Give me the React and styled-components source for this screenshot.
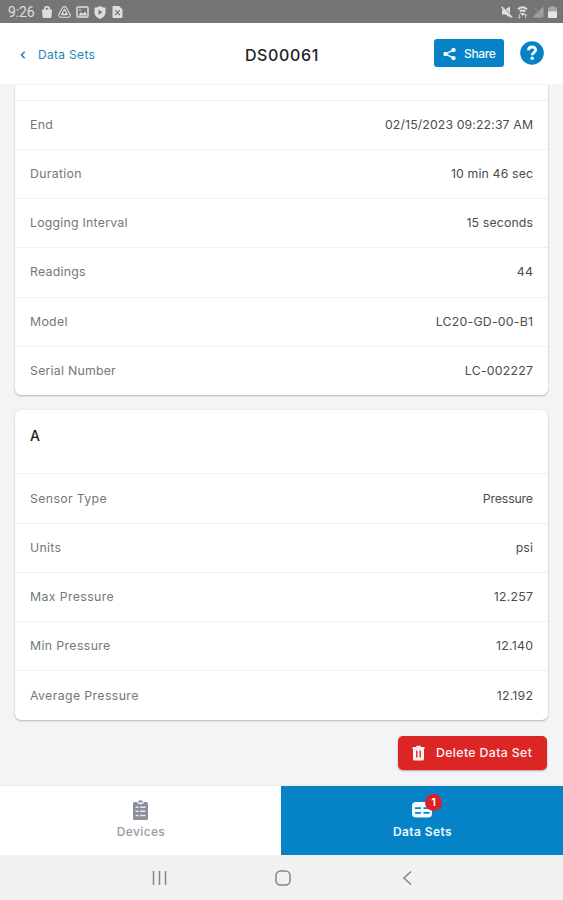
import React from 'react';
import styled, { createGlobalStyle } from 'styled-components';

const Global = createGlobalStyle`
  * { box-sizing: border-box; }
  body { margin: 0; background: #f3f4f6; font-family: Inter, "Liberation Sans", sans-serif; }
`;

const Screen = styled.div`
  width: 563px;
  height: 900px;
  display: flex;
  flex-direction: column;
  overflow: hidden;
  background: #f2f4f6;
  svg { display: block; flex: none; }
`;

const StatusBar = styled.div`
  height: 23px;
  flex: none;
  display: flex;
  align-items: center;
  justify-content: space-between;
  padding: 1px 6px 0 8px;
  background: #757575;
  color: #dedede;
`;
const Clock = styled.span`
  width: 28px;
  font: 400 14px/20px Roboto, sans-serif;
  letter-spacing: -0.1px;
`;
const StatusIcons = styled.div`
  display: flex;
  align-items: center;
  gap: ${(p) => p.$gap}px;
`;

const Header = styled.header`
  height: 62px;
  flex: none;
  display: grid;
  grid-template-columns: 1fr auto 1fr;
  align-items: center;
  padding: 0 19px 0 20px;
  background: #fff;
  border-bottom: 1px solid #f3f4f5;
`;
const BackLink = styled.div`
  display: flex;
  align-items: center;
  gap: 12px;
  margin-top: 2px;
  color: #2388b8;
  font-size: 12px;
  letter-spacing: 0.32px;
`;
const Title = styled.h1`
  margin: 3px 0 0;
  font-size: 16px;
  font-weight: 450;
  letter-spacing: 0.65px;
  color: #222;
`;
const HeaderActions = styled.div`
  display: flex;
  align-items: center;
  justify-content: flex-end;
  gap: 16px;
  margin-top: -1px;
`;
const ShareButton = styled.button`
  width: 70px;
  height: 28px;
  display: flex;
  align-items: center;
  gap: 8px;
  padding: 1px 0 0 9px;
  border: 0;
  border-radius: 3px;
  background: #0583c6;
  color: #f2fafe;
  font: 550 12px/27px Inter, sans-serif;
  letter-spacing: -0.35px;
`;

const Content = styled.main`
  height: 700px;
  flex: none;
  display: flex;
  flex-direction: column;
  overflow: hidden;
  padding: 0 15px;
`;
const Card = styled.section`
  flex: none;
  margin-bottom: 15px;
  background: #fff;
  border-radius: ${(p) => (p.$scrolled ? '0 0 6px 6px' : '6px')};
  box-shadow: 0 1px 2px rgba(0, 0, 0, 0.25), 0 0 2px rgba(0, 0, 0, 0.06);
`;
const CardHead = styled.div`
  height: 63.4px;
  padding: 16px 15px 0;
  font-size: 14px;
  font-weight: 500;
  line-height: 20px;
  color: #1c1c1c;
`;
const ScrolledRow = styled.div`
  height: 14.6px;
`;
const Row = styled.div`
  height: 49.25px;
  display: flex;
  align-items: center;
  justify-content: space-between;
  padding: 0 15px;
  border-top: 1px solid #f0f1f2;
  font-size: 12.3px;
  line-height: 16px;
`;
const Label = styled.span`
  color: #757779;
  letter-spacing: ${(p) => p.$track}px;
`;
const Value = styled.span`
  color: #4b4c4e;
  letter-spacing: ${(p) => p.$track}px;
  margin-right: ${(p) => -p.$track}px;
`;

const DeleteButton = styled.button`
  align-self: flex-end;
  width: 149px;
  height: 34px;
  flex: none;
  margin: 1px 1px 0 0;
  display: flex;
  align-items: center;
  gap: 11px;
  padding: 0 0 0 14px;
  border: 0;
  border-radius: 5px;
  background: #dc2626;
  color: #fff3f3;
  font: 550 12.3px/34px Inter, sans-serif;
  letter-spacing: 0.37px;
  white-space: nowrap;
  box-shadow: 0 1px 2px rgba(90, 0, 0, 0.35);
`;

const Tabs = styled.nav`
  height: 70px;
  flex: none;
  display: grid;
  grid-template-columns: 281px 1fr;
  background: #fff;
  border-top: 1px solid #e9ebed;
`;
const Tab = styled.div`
  display: flex;
  flex-direction: column;
  align-items: center;
  padding-top: 14px;
  gap: 4px;
  background: ${(p) => (p.$active ? '#0583c6' : '#fff')};
  color: ${(p) => (p.$active ? '#eef9ff' : '#999ba1')};
  font-size: 12px;
  line-height: 16px;
  font-weight: ${(p) => (p.$active ? 600 : 450)};
  letter-spacing: ${(p) => (p.$active ? 0.4 : 0.35)}px;
`;
const TabLabel = styled.span`
  padding-left: 1px;
`;
const TabIcon = styled.div`
  position: relative;
  height: 20px;
`;
const Badge = styled.span`
  position: absolute;
  left: 13px;
  top: -6.5px;
  width: 17px;
  height: 17px;
  border-radius: 50%;
  background: #dc2028;
  color: #fff;
  font-size: 11px;
  line-height: 17px;
  letter-spacing: 0;
  text-align: center;
`;

const SystemNav = styled.div`
  height: 45px;
  flex: none;
  display: flex;
  align-items: center;
  gap: 107px;
  padding: 1px 0 0 150px;
  background: #f1f1f1;
`;

const Bag = () => (
  <svg width="12" height="12" viewBox="0 0 12 12">
    <path d="M1 3.500h10L10.500 10.500a1.500 1.500 0 0 1-1.500 1.500H3a1.500 1.500 0 0 1-1.500-1.500z" fill="currentColor" />
    <path d="M3.700 4V3a2.300 2.300 0 0 1 4.600 0v1" fill="none" stroke="currentColor" strokeWidth="1.600" />
  </svg>
);
const Drive = () => (
  <svg width="13" height="12" viewBox="0 0 13 12" fill="none" stroke="currentColor" strokeWidth="1.1" strokeLinejoin="round">
    <path d="M4.7 1.4Q6.5-.2 8.3 1.4L12 8q.8 2.5-1.5 3.2h-8Q.2 10.500 1 8z" />
    <path d="M6.500 3.200 9.500 8.500h-6zM4.300 6 6 9.500M8.700 6 7 9.500" />
  </svg>
);
const Picture = () => (
  <svg width="13" height="12" viewBox="0 0 13 12">
    <rect x="1" y="1" width="11" height="10" rx="1" fill="none" stroke="currentColor" strokeWidth="1.5" />
    <path d="M2.500 9.500 5 6l1.700 2L9 5.500l2 4z" fill="currentColor" />
    <circle cx="4" cy="3.800" r=".9" fill="currentColor" />
  </svg>
);
const Shield = () => (
  <svg width="12" height="13" viewBox="0 0 12 13">
    <path d="M6 0Q8.500 1.700 11.500 1.800V6.500Q11 11 6 13 1 11 .5 6.500V1.800Q3.500 1.700 6 0z" fill="currentColor" />
    <path d="M4.500 3.500 8.500 6.200 4.500 9z" fill="#757575" />
  </svg>
);
const FileX = () => (
  <svg width="12" height="12" viewBox="-1.500 0 12 12">
    <path d="M1 0h5.500L10 3.500V11a1 1 0 0 1-1 1H1a1 1 0 0 1-1-1V1a1 1 0 0 1 1-1z" fill="currentColor" />
    <path d="M2.700 4.200 7.300 9.200M7.300 4.200 2.700 9.200" stroke="#757575" strokeWidth="1.200" />
  </svg>
);
const Mute = () => (
  <svg width="12" height="12" viewBox="0 0 12 12">
    <path d="M1 3.500h3L9 .5V11.500L4.500 8.500H1z" fill="currentColor" />
    <path d="M1.500 .3 11.800 10.600" stroke="#757575" strokeWidth="1" />
    <path d="M.6.800 11.300 11.500" stroke="currentColor" strokeWidth="1.500" />
  </svg>
);
const Wifi = () => (
  <svg width="11" height="13" viewBox="0 0 11 13">
    <path d="M1 3.200Q5.500-.5 10 3.200M2.700 5.500q2.800-2.200 5.600 0" fill="none" stroke="currentColor" strokeWidth="1.900" />
    <path d="M3 7h5L5.500 10z" fill="currentColor" />
    <path d="M2.300 8v4M1 10.700l1.300 1.500 1.300-1.500M8.500 12V8M7.200 9.500 8.500 8l1.300 1.500" fill="none" stroke="currentColor" strokeWidth=".8" />
  </svg>
);
const Signal = () => (
  <svg width="12" height="12" viewBox="0 0 12 12">
    <path d="M11.500.5v11H.5z" fill="#a2a2a2" />
    <path d="M1 1 11 11" stroke="#8c8c8c" strokeWidth="1" />
  </svg>
);
const Battery = () => (
  <svg width="9" height="12" viewBox="0 0 9 12">
    <path d="M3 0h3v1.300h2a1 1 0 0 1 1 1V6H0V2.300a1 1 0 0 1 1-1h2z" fill="#a8a8a8" />
    <path d="M0 5.500h9V11a1 1 0 0 1-1 1H1a1 1 0 0 1-1-1z" fill="#e6e6e6" />
  </svg>
);
const BackChevron = () => (
  <svg width="6" height="8" viewBox="0 0 6 8" fill="none" stroke="currentColor" strokeWidth="1.600">
    <path d="M4.600.8 1.500 4l3.100 3.200" />
  </svg>
);
const ShareIcon = () => (
  <svg width="13" height="14" viewBox="0 0 13 14" fill="currentColor">
    <path d="M10.500 2.800 2.500 7l8 4.200" fill="none" stroke="currentColor" strokeWidth="1.500" />
    <circle cx="10.500" cy="2.900" r="2.200" />
    <circle cx="2.500" cy="7" r="2.200" />
    <circle cx="10.500" cy="11.100" r="2.200" />
  </svg>
);
const Help = () => (
  <svg width="24" height="24" viewBox="0 0 24 24">
    <circle cx="12" cy="12" r="11.800" fill="#0583c6" />
    <path d="M8.500 9.300C8.500 4.900 15.600 5 15.600 9c0 2.500-3.300 2.500-3.300 5.200" fill="none" stroke="#fff" strokeWidth="2.800" />
    <circle cx="12.200" cy="17.300" r="1.700" fill="#fff" />
  </svg>
);
const Trash = () => (
  <svg width="13" height="16" viewBox="0 0 13 16">
    <path d="M4.300 2V.8h4.400V2H12.500v2H.5V2z" fill="currentColor" />
    <path d="M1 3h11v11a1.500 1.500 0 0 1-1.500 1.500h-8A1.500 1.500 0 0 1 1 14z" fill="currentColor" />
    <path d="M4.800 5.500v7M8.200 5.500v7" stroke="#dc2626" strokeWidth="1.400" />
  </svg>
);
const Clipboard = () => (
  <svg width="15" height="20" viewBox="0 0 15 20">
    <path d="M1.500 2H4q.3 2 3.500 2T11 2h2.500A1.500 1.500 0 0 1 15 3.500v15a1.500 1.500 0 0 1-1.500 1.500h-12A1.500 1.500 0 0 1 0 18.500v-15A1.500 1.500 0 0 1 1.500 2z" fill="#8b8e9b" />
    <path d="M5 1.500Q7.500-.8 10 1.500V2.500H5z" fill="#8b8e9b" />
    <path d="M2.600 7.200h3M7 7.200h5.500M2.600 11.300h3M7 11.300h5.500M2.600 15.500h3M7 15.500h5.500" stroke="#e4e7f0" strokeWidth="1.500" />
  </svg>
);
const Table = () => (
  <svg width="20" height="20" viewBox="0 0 20 20">
    <rect x="0" y="2" width="20" height="15.500" rx="4" fill="#f5fcff" />
    <path d="M3 8.200h6M11.500 8.200h6M3 12.800h6M11.500 12.800h6" stroke="#0583c6" strokeWidth="1.800" />
  </svg>
);

const summary = [
  { label: 'End', value: '02/15/2023 09:22:37 AM', valueTrack: 0.12 },
  { label: 'Duration', value: '10 min 46 sec', valueTrack: 0.14 },
  { label: 'Logging Interval', value: '15 seconds', track: 0.24, valueTrack: 0.14 },
  { label: 'Readings', value: '44', track: 0.24 },
  { label: 'Model', value: 'LC20-GD-00-B1' },
  { label: 'Serial Number', value: 'LC-002227', track: 0.24 },
];
const sensor = [
  { label: 'Sensor Type', value: 'Pressure', track: 0.36, valueTrack: -0.16 },
  { label: 'Units', value: 'psi', valueTrack: 0.14 },
  { label: 'Max Pressure', value: '12.257', track: 0.38 },
  { label: 'Min Pressure', value: '12.140', track: 0.38 },
  { label: 'Average Pressure', value: '12.192', track: 0.39 },
];

const Rows = ({ items }) =>
  items.map(({ label, value, track = 0.3, valueTrack = 0.24 }) => (
    <Row key={label}>
      <Label $track={track}>{label}</Label>
      <Value $track={valueTrack}>{value}</Value>
    </Row>
  ));

export default function App() {
  return (
    <Screen>
      <Global />
      <StatusBar>
        <StatusIcons $gap={5}>
          <Clock>9:26</Clock>
          <Bag />
          <Drive />
          <Picture />
          <Shield />
          <FileX />
        </StatusIcons>
        <StatusIcons $gap={4}>
          <Mute />
          <Wifi />
          <Signal />
          <Battery />
        </StatusIcons>
      </StatusBar>
      <Header>
        <BackLink>
          <BackChevron />
          Data Sets
        </BackLink>
        <Title>DS00061</Title>
        <HeaderActions>
          <ShareButton>
            <ShareIcon />
            Share
          </ShareButton>
          <Help />
        </HeaderActions>
      </Header>
      <Content>
        <Card $scrolled>
          <ScrolledRow />
          <Rows items={summary} />
        </Card>
        <Card>
          <CardHead>A</CardHead>
          <Rows items={sensor} />
        </Card>
        <DeleteButton>
          <Trash />
          Delete Data Set
        </DeleteButton>
      </Content>
      <Tabs>
        <Tab>
          <TabIcon>
            <Clipboard />
          </TabIcon>
          <TabLabel>Devices</TabLabel>
        </Tab>
        <Tab $active>
          <TabIcon>
            <Table />
            <Badge>1</Badge>
          </TabIcon>
          <TabLabel>Data Sets</TabLabel>
        </Tab>
      </Tabs>
      <SystemNav>
        <svg width="18" height="16" viewBox="0 0 18 16" stroke="#858585" strokeWidth="1.500">
          <path d="M3.500 1v14M9.500 1v14M15.500 1v14" />
        </svg>
        <svg width="16" height="16" viewBox="0 0 16 16" fill="none" stroke="#858585" strokeWidth="1.500">
          <rect x="1" y="1" width="14" height="14" rx="4.500" />
        </svg>
        <svg width="16" height="16" viewBox="-4 0 16 16" fill="none" stroke="#858585" strokeWidth="1.500">
          <path d="M9 1.500 2 8l7 6.500" />
        </svg>
      </SystemNav>
    </Screen>
  );
}
